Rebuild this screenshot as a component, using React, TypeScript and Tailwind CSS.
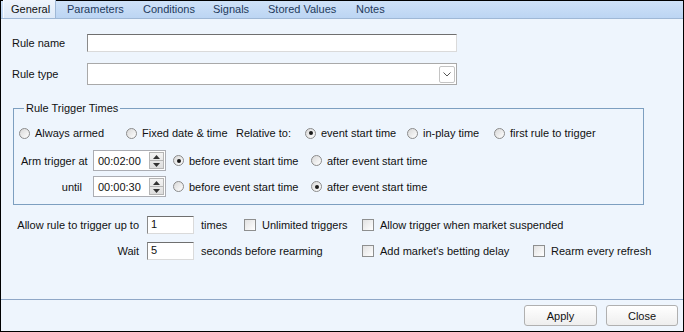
function Radio({ checked }: { checked?: boolean }) {
  return (
    <span className="inline-flex w-[11px] h-[11px] shrink-0 rounded-full border border-[#8b8b8b] bg-gradient-to-br from-[#d8d8d8] to-white items-center justify-center">
      {checked && <span className="w-[4px] h-[4px] rounded-full bg-[#1a1a1a]" />}
    </span>
  );
}

function RadioOpt({ label, checked, w }: { label: string; checked?: boolean; w: string }) {
  return (
    <span className={`inline-flex items-center gap-[5px] ${w}`}>
      <Radio checked={checked} />
      <span>{label}</span>
    </span>
  );
}

function Check({ label, w }: { label: string; w: string }) {
  return (
    <span className={`inline-flex items-center gap-[6px] ${w}`}>
      <span className="w-[12px] h-[12px] shrink-0 border border-[#8e8f8f] bg-gradient-to-br from-[#e2e2e2] to-white" />
      <span>{label}</span>
    </span>
  );
}

function Spinner({ value }: { value: string }) {
  return (
    <span className="flex items-center w-[73px] h-[21px] border border-[#abadb3] bg-white">
      <span className="flex-1 pl-[4px]">{value}</span>
      <span className="flex flex-col w-[15px] h-[17px] mr-[1px] border border-[#b5b5b5] bg-gradient-to-b from-[#f4f4f4] to-[#dedede]">
        <span className="flex-1 flex items-center justify-center border-b border-[#b5b5b5]">
          <svg width="7" height="4" viewBox="0 0 7 4"><path d="M0 4 L3.5 0 L7 4 Z" fill="#333" /></svg>
        </span>
        <span className="flex-1 flex items-center justify-center">
          <svg width="7" height="4" viewBox="0 0 7 4"><path d="M0 0 L3.5 4 L7 0 Z" fill="#333" /></svg>
        </span>
      </span>
    </span>
  );
}

export default function App() {
  return (
    <div className="w-[684px] h-[332px] border border-black bg-[#eef5fd] flex flex-col text-[11px] leading-[14px] text-[#111] font-['Liberation_Sans',Arial,sans-serif]">
      {/* tab strip */}
      <div className="h-[18px] shrink-0 flex items-end bg-gradient-to-b from-[#cfe2f8] to-[#bcd5f3] border-b border-[#9fb8d6] text-[#1e3a5c]">
        <div className="ml-[2px] h-[18px] w-[53px] pl-[7px] flex items-center bg-gradient-to-b from-[#eef4fc] to-[#dde9f8] border-l border-[#f6faff] border-r border-r-[#9fb8d6] text-[#111]">
          General
        </div>
        <div className="ml-[11px] h-[18px] flex items-center">
          <span className="w-[76px]">Parameters</span>
          <span className="w-[70px]">Conditions</span>
          <span className="w-[55px]">Signals</span>
          <span className="w-[88px]">Stored Values</span>
          <span>Notes</span>
        </div>
      </div>

      {/* body */}
      <div className="flex-1 flex flex-col pl-[11px]">
        <div className="mt-[15px] h-[18px] flex items-center">
          <span className="w-[75px]">Rule name</span>
          <span className="w-[370px] h-[18px] bg-white border border-[#dadada] border-t-[#6f6f6f] border-l-[#8a8a8a]" />
        </div>
        <div className="mt-[11px] h-[22px] flex items-center">
          <span className="w-[75px]">Rule type</span>
          <span className="w-[370px] h-[22px] bg-white border border-[#a9a9a9] flex items-center justify-end pr-[1px]">
            <span className="w-[16px] h-[17px] border border-[#c4c4c4] rounded-[2px] bg-white flex items-center justify-center">
              <svg width="8" height="5" viewBox="0 0 8 5"><path d="M0.5 0.5 L4 4 L7.5 0.5" fill="none" stroke="#555" strokeWidth="1" /></svg>
            </span>
          </span>
        </div>

        <fieldset className="mt-[16px] ml-[1px] w-[631px] h-[104px] border border-[#7d9fc0] pl-[5px]">
          <legend className="ml-[5px] px-[2px]">Rule Trigger Times</legend>
          <div className="mt-[10px] h-[16px] flex items-center">
            <RadioOpt label="Always armed" w="w-[107px]" />
            <RadioOpt label="Fixed date & time" w="w-[110px]" />
            <span className="w-[69px]">Relative to:</span>
            <RadioOpt label="event start time" checked w="w-[102px]" />
            <RadioOpt label="in-play time" w="w-[87px]" />
            <RadioOpt label="first rule to trigger" w="" />
          </div>
          <div className="mt-[9px] h-[21px] flex items-center">
            <span className="w-[74px] pl-[2px]">Arm trigger at</span>
            <Spinner value="00:02:00" />
            <span className="ml-[7px]" />
            <RadioOpt label="before event start time" checked w="w-[138px]" />
            <RadioOpt label="after event start time" w="" />
          </div>
          <div className="mt-[5px] h-[21px] flex items-center">
            <span className="w-[74px] text-right pr-[11px]">until</span>
            <Spinner value="00:00:30" />
            <span className="ml-[7px]" />
            <RadioOpt label="before event start time" w="w-[138px]" />
            <RadioOpt label="after event start time" checked w="" />
          </div>
        </fieldset>

        <div className="mt-[11px] h-[18px] flex items-center">
          <span className="w-[135px] text-right pr-[8px]">Allow rule to trigger up to</span>
          <span className="w-[47px] h-[18px] bg-white border border-[#dadada] border-t-[#6f6f6f] border-l-[#8a8a8a] pl-[3px]">1</span>
          <span className="ml-[7px] w-[43px]">times</span>
          <Check label="Unlimited triggers" w="w-[118px]" />
          <Check label="Allow trigger when market suspended" w="" />
        </div>
        <div className="mt-[8px] h-[18px] flex items-center">
          <span className="w-[135px] text-right pr-[8px]">Wait</span>
          <span className="w-[47px] h-[18px] bg-white border border-[#dadada] border-t-[#6f6f6f] border-l-[#8a8a8a] pl-[3px]">5</span>
          <span className="ml-[7px] w-[161px]">seconds before rearming</span>
          <Check label="Add market's betting delay" w="w-[171px]" />
          <Check label="Rearm every refresh" w="" />
        </div>
      </div>

      {/* footer */}
      <div className="h-[32px] shrink-0 border-t border-[#8fa7c7] flex items-center justify-end gap-[9px] pr-[5px]">
        <button className="w-[73px] h-[21px] rounded-[3px] border border-[#b0b0b0] bg-gradient-to-b from-white to-[#eeeeee]">Apply</button>
        <button className="w-[72px] h-[21px] rounded-[3px] border border-[#b0b0b0] bg-gradient-to-b from-white to-[#eeeeee]">Close</button>
      </div>
    </div>
  );
}
